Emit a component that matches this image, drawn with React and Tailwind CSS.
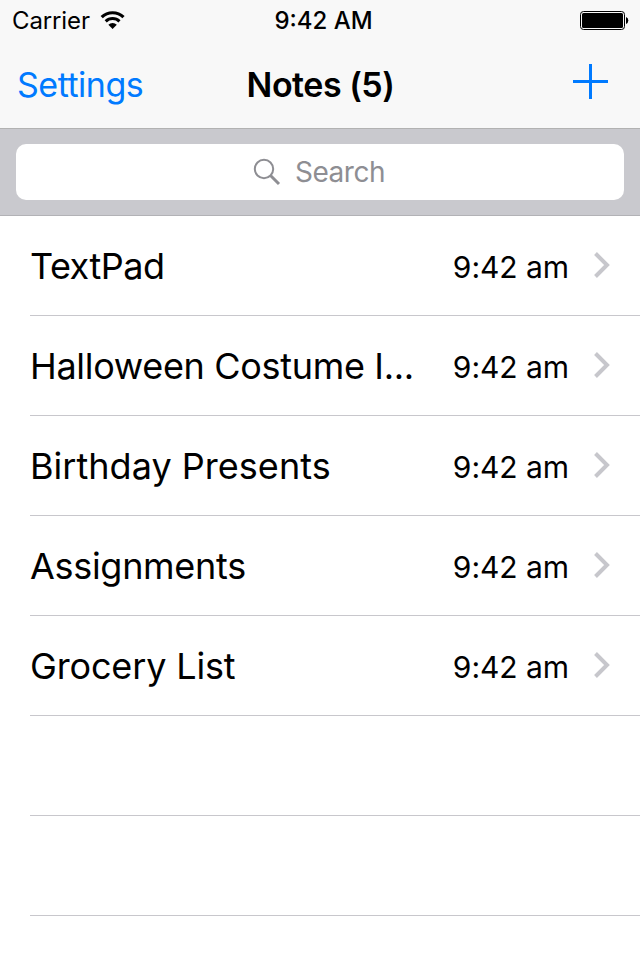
const notes = [
  { title: "TextPad", time: "9:42 am", tracking: "tracking-[-0.5px]" },
  { title: "Halloween Costume I...", time: "9:42 am", tracking: "tracking-[-0.32px]" },
  { title: "Birthday Presents", time: "9:42 am", tracking: "tracking-[0.03px]" },
  { title: "Assignments", time: "9:42 am", tracking: "tracking-[-0.3px]" },
  { title: "Grocery List", time: "9:42 am", tracking: "tracking-[-0.15px]" },
];

function StatusBar() {
  return (
    <div className="grid h-10 grid-cols-[1fr_auto_1fr] items-center pl-3 pr-[11px] pt-0.5">
      <div className="flex items-center gap-2.5">
        <span className="text-[24px] leading-[38px] tracking-[-0.12px]">Carrier</span>
        <svg className="mb-0.5" width="26" height="20" viewBox="0 0 26 20">
          <path d="M1.7 7.2a15.6 15.6 0 0 1 21.8 0" fill="none" stroke="#000" strokeWidth="3.2" />
          <path d="M5.7 11.4a9.9 9.9 0 0 1 13.8 0" fill="none" stroke="#000" strokeWidth="3" />
          <path d="M12.6 19l-4.2-4.3a6 6 0 0 1 8.4 0z" />
        </svg>
      </div>
      <span className="pl-1.5 text-center text-[24px] font-medium leading-[38px]">9:42 AM</span>
      <svg className="mb-0.5 justify-self-end" width="49" height="19" viewBox="0 0 49 19">
        <rect x="0.5" y="0.5" width="44" height="18" rx="3" fill="none" stroke="#000" />
        <rect x="2" y="2" width="41" height="15" rx="1.5" />
        <path d="M46 6a3.8 3.8 0 0 1 0 7z" />
      </svg>
    </div>
  );
}

function NavBar() {
  return (
    <div className="grid h-22 grid-cols-[1fr_auto_1fr] items-center pl-[17px] pr-8">
      <button className="text-left text-[34px] leading-[87px] tracking-[-0.5px] text-[#007aff]">Settings</button>
      <h1 className="pl-4 text-center text-[34px] font-semibold leading-[87px] tracking-[-0.5px]">
        Notes (5)
      </h1>
      <svg className="mb-[5px] justify-self-end" width="35" height="35" viewBox="0 0 35 35">
        <path d="M17.5 0v35M0 17.5h35" stroke="#007aff" strokeWidth="3" />
      </svg>
    </div>
  );
}

function SearchBar() {
  return (
    <div className="h-[87px] border-b border-[#b2b2b6] bg-[#c9c9ce] px-4 pt-[15px]">
      <div className="flex h-14 items-center justify-center gap-3.5 rounded-[10px] bg-white pr-0.5 text-[#8e8e93]">
        <svg width="28" height="28" viewBox="0 0 28 28" fill="none" stroke="currentColor" strokeWidth="2">
          <circle cx="11" cy="11" r="9.2" />
          <path d="M17.5 17.5l8.5 8.5" strokeWidth="3" />
        </svg>
        <span className="text-[28px] tracking-[-0.45px]">Search</span>
      </div>
    </div>
  );
}

function NoteRow({ note }) {
  return (
    <li className="ml-[30px] flex h-[100px] items-center border-b border-[#c8c7cc] pr-[30px]">
      <span className={`flex-1 whitespace-nowrap pt-px text-[36px] ${note.tracking}`}>{note.title}</span>
      <span className="pt-[3px] text-[30px] tracking-[-0.05px]">{note.time}</span>
      <svg className="mb-0.5 ml-6" width="17" height="28" viewBox="0 0 17 28" fill="none" stroke="#c7c7cc" strokeWidth="4">
        <path d="M2.5 2.5L14 14 2.5 25.5" />
      </svg>
    </li>
  );
}

export default function App() {
  return (
    <div className="h-[960px] w-[640px] overflow-hidden bg-white font-['Inter',sans-serif] text-black">
      <header className="border-b border-[#b2b2b2] bg-[#f8f8f8]">
        <StatusBar />
        <NavBar />
      </header>
      <SearchBar />
      <ul>
        {notes.map((note) => (
          <NoteRow key={note.title} note={note} />
        ))}
        <li className="ml-[30px] h-[100px] border-b border-[#c8c7cc]" />
        <li className="ml-[30px] h-[100px] border-b border-[#c8c7cc]" />
      </ul>
    </div>
  );
}
